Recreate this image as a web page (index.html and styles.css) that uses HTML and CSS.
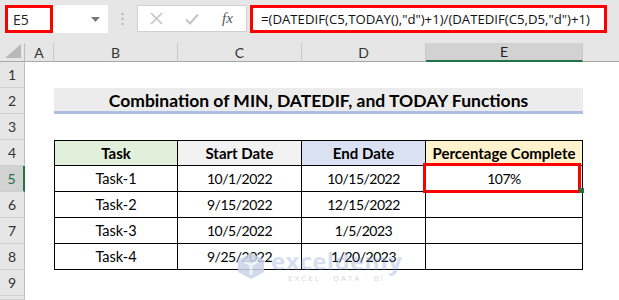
FILE: index.html
```html
<!DOCTYPE html>
<html>
<head>
<meta charset="utf-8">
<link rel="stylesheet" href="styles.css">
</head>
<body>
<div class="toolbar">
  <div class="namebox">
    <span class="name">E5</span>
    <svg class="caret" width="9" height="5" viewBox="0 0 9 5"><path d="M0 0h9L4.5 5z" fill="#7a7a7a"/></svg>
    <div class="redbox"></div>
  </div>
  <svg class="dots" width="3" height="13" viewBox="0 0 3 13"><rect x="0.5" y="0" width="2" height="2" fill="#b5b5b5"/><rect x="0.5" y="5" width="2" height="2" fill="#b5b5b5"/><rect x="0.5" y="10" width="2" height="2" fill="#b5b5b5"/></svg>
  <div class="fbtns">
    <svg width="13" height="13" viewBox="0 0 13 13"><path d="M1 1L12 12M12 1L1 12" stroke="#c4c4c4" stroke-width="1.6"/></svg>
    <svg width="14" height="12" viewBox="0 0 14 12"><path d="M1 6.5L5 10.5L13 1.5" stroke="#c4c4c4" stroke-width="2" fill="none"/></svg>
    <span class="fx">fx</span>
  </div>
  <div class="formula">=(DATEDIF(C5,TODAY(),"d")+1)/(DATEDIF(C5,D5,"d")+1)</div>
</div>

<div class="sheet">
  <div class="ch corner"><svg width="16" height="14" viewBox="0 0 16 14"><path d="M16 0V14H0z" fill="#b9b9b9"/></svg></div>
  <div class="ch">A</div>
  <div class="ch">B</div>
  <div class="ch">C</div>
  <div class="ch">D</div>
  <div class="ch sel">E</div>
  <div class="ch last"></div>

  <div class="rh">1</div><div class="c"></div><div class="c"></div><div class="c"></div><div class="c"></div><div class="c"></div><div class="c"></div>

  <div class="rh">2</div><div class="c"></div><div class="title">Combination of MIN, DATEDIF, and TODAY Functions</div><div class="c"></div>

  <div class="rh">3</div><div class="c"></div><div class="c"></div><div class="c"></div><div class="c"></div><div class="c"></div><div class="c"></div>

  <div class="rh">4</div><div class="c"></div>
  <div class="t th first top green">Task</div>
  <div class="t th top gray">Start Date</div>
  <div class="t th top blue">End Date</div>
  <div class="t th top yellow">Percentage Complete</div>
  <div class="c"></div>

  <div class="rh rsel">5</div><div class="c"></div>
  <div class="t first">Task-1</div><div class="t num">10/1/2022</div><div class="t num">10/15/2022</div><div class="t num">107%</div><div class="c"></div>

  <div class="rh">6</div><div class="c"></div>
  <div class="t first">Task-2</div><div class="t num">9/15/2022</div><div class="t num">12/15/2022</div><div class="t"></div><div class="c"></div>

  <div class="rh">7</div><div class="c"></div>
  <div class="t first">Task-3</div><div class="t num">10/5/2022</div><div class="t num">1/5/2023</div><div class="t"></div><div class="c"></div>

  <div class="rh">8</div><div class="c"></div>
  <div class="t first">Task-4</div><div class="t num">9/25/2022</div><div class="t num">1/20/2023</div><div class="t"></div><div class="c"></div>

  <div class="rh">9</div><div class="c"></div><div class="c"></div><div class="c"></div><div class="c"></div><div class="c"></div><div class="c"></div>
  <div class="rh"></div><div class="c"></div><div class="c"></div><div class="c"></div><div class="c"></div><div class="c"></div><div class="c"></div>

  <div class="selection"><div class="handle"></div></div>
  <div class="watermark">
    <svg class="wm-icon" width="28" height="28" viewBox="0 0 28 28"><path d="M14 1L27 8V20L14 27L1 20V8Z" fill="#c9d3e8"/><path d="M7 9L14 13L21 9M14 13V23" stroke="#eef1f8" stroke-width="3" fill="none"/></svg>
    <div class="wm-text">
      <div class="wm-big">exceldemy</div>
      <div class="wm-small">EXCEL · DATA · BI</div>
    </div>
  </div>
</div>
</body>
</html>
```

FILE: styles.css
```css
html, body {
  margin: 0;
  padding: 0;
  background: #ffffff;
}
body {
  width: 619px;
  height: 300px;
  overflow: hidden;
  font-family: "Lato", "Liberation Sans", sans-serif;
}
.toolbar {
  height: 43px;
  box-sizing: border-box;
  background: #e6e6e6;
  display: flex;
  align-items: flex-start;
  padding-top: 5px;
}
.namebox {
  position: relative;
  margin-left: 5px;
  width: 103px;
  height: 28px;
  background: #fff;
  display: flex;
  align-items: center;
}
.name {
  font-family: "Open Sans", "Noto Sans", sans-serif;
  font-size: 14px;
  margin-left: 8px;
  color: #222;
}
.caret {
  margin-left: auto;
  margin-right: 8px;
}
.redbox {
  position: absolute;
  left: 0;
  top: 0;
  width: 48px;
  height: 28px;
  box-sizing: border-box;
  border: 3px solid #ff0000;
}
.dots {
  margin-left: 13px;
  margin-top: 8px;
}
.fbtns {
  margin-left: 13px;
  width: 110px;
  height: 27px;
  box-sizing: border-box;
  background: #fff;
  border: 1px solid #d0d0d0;
  display: flex;
  align-items: center;
  padding-left: 12px;
  gap: 22px;
}
.fx {
  font-family: "Liberation Serif", serif;
  font-style: italic;
  font-size: 15px;
  color: #555;
  margin-left: 1px;
}
.formula {
  margin-left: 3px;
  width: 357px;
  height: 28px;
  box-sizing: border-box;
  background: #fff;
  border: 3px solid #ff0000;
  font-family: "Open Sans", "Noto Sans", sans-serif;
  font-size: 13.2px;
  line-height: 22px;
  padding-left: 8px;
  color: #111;
  white-space: nowrap;
  overflow: hidden;
}
.sheet {
  position: relative;
  display: grid;
  grid-template-columns: 25px 29px 124px 124px 124px 157px 1fr;
  grid-template-rows: 19px repeat(9, 26px) 4px;
}
.ch {
  background: #e6e6e6;
  border-right: 1px solid #c8c8c8;
  border-bottom: 1px solid #a8a8a8;
  box-sizing: border-box;
  font-size: 14px;
  color: #333;
  display: flex;
  align-items: center;
  justify-content: center;
}
.ch.corner {
  border-right: 1px solid #bdbdbd;
  justify-content: flex-end;
  align-items: flex-end;
  padding: 0 3px 3px 0;
}
.ch.sel {
  background: #d2d2d2;
  border-bottom: 2px solid #217346;
  color: #222;
}
.ch.last {
  border-right: none;
}
.rh {
  background: #e6e6e6;
  border-right: 1px solid #bdbdbd;
  border-bottom: 1px solid #d0d0d0;
  box-sizing: border-box;
  font-size: 14px;
  color: #333;
  display: flex;
  align-items: center;
  justify-content: center;
}
.rh.rsel {
  background: #d2d2d2;
  border-right: 2px solid #217346;
  color: #217346;
}
.c {
  background: #fff;
}
.title {
  grid-column: 3 / 7;
  background: #ececec;
  border-bottom: 3px solid #adc0e4;
  box-sizing: border-box;
  font-weight: 700;
  font-size: 17.5px;
  color: #000;
  display: flex;
  align-items: center;
  justify-content: center;
  padding-top: 2px;
}
.t {
  box-sizing: border-box;
  border-right: 1px solid #000;
  border-bottom: 1px solid #000;
  font-size: 14.5px;
  color: #000;
  display: flex;
  align-items: center;
  justify-content: center;
}
.t.num {
  font-size: 14px;
  letter-spacing: -0.5px;
}
.t.first {
  border-left: 1px solid #000;
}
.t.top {
  border-top: 1px solid #000;
}
.th {
  font-weight: 700;
  font-size: 15px;
}
.green { background: #e2efda; }
.gray { background: #f2f2f2; }
.blue { background: #d9e1f2; }
.yellow { background: #fff2cc; }
.selection {
  position: absolute;
  left: 423px;
  top: 120px;
  width: 158px;
  height: 30px;
  box-sizing: border-box;
  border: 3px solid #ff0000;
}
.handle {
  position: absolute;
  right: -6px;
  bottom: -3px;
  width: 5px;
  height: 5px;
  background: #217346;
}
.watermark {
  position: absolute;
  left: 237px;
  top: 206px;
  display: flex;
  align-items: center;
  gap: 6px;
  opacity: 0.85;
}
.wm-text {
  display: flex;
  flex-direction: column;
  align-items: center;
}
.wm-big {
  font-family: "Open Sans", sans-serif;
  font-weight: 700;
  font-size: 24px;
  line-height: 24px;
  color: rgba(120, 145, 205, 0.35);
  letter-spacing: 0.3px;
}
.wm-small {
  font-family: "Open Sans", sans-serif;
  font-size: 8px;
  line-height: 10px;
  letter-spacing: 2px;
  color: rgba(130, 140, 160, 0.45);
}
```
